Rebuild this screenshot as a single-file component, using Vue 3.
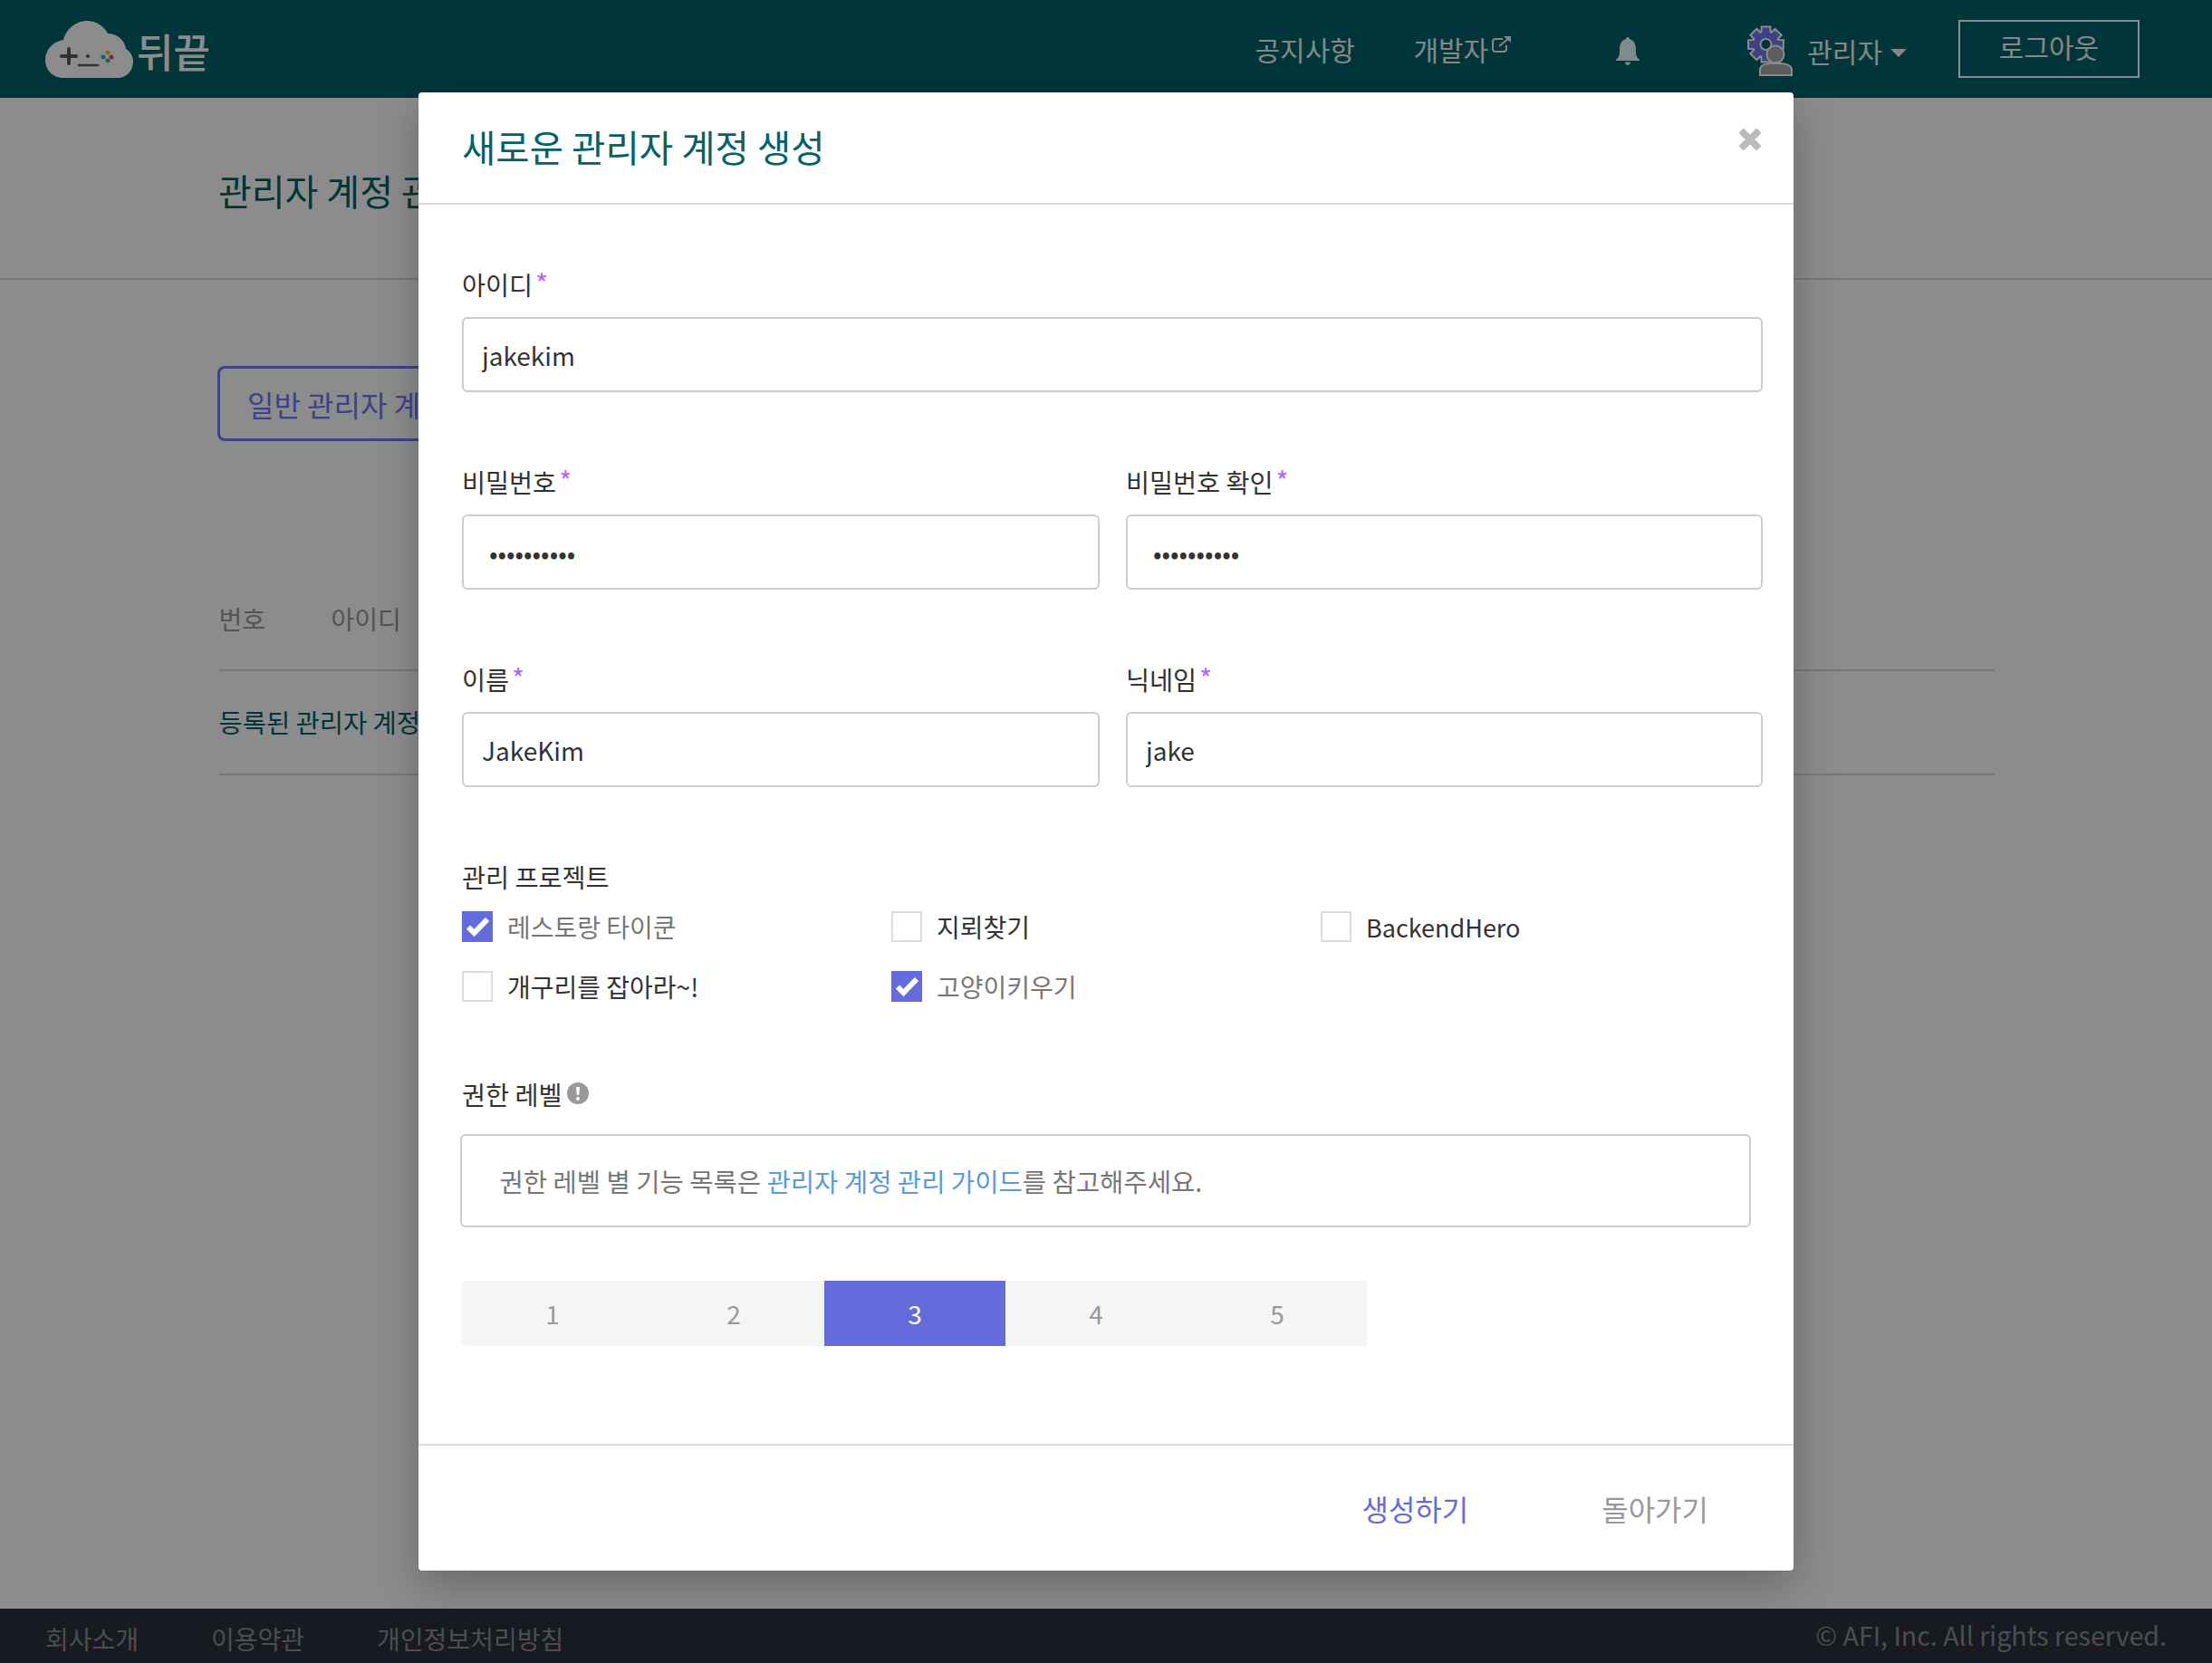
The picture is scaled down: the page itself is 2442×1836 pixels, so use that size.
<template>
  <div class="page">
    <header class="topbar">
      <div class="logo">
        <svg class="logo-cloud" viewBox="0 0 97 63" width="97" height="63">
          <path d="M20 63C8 63 0 54 0 43C0 32 8 23 20 21C23 9 34 0 46 0C56 0 65 6 69 14C80 14 88 22 89 31C94 34 97 39 97 45C97 55 90 63 80 63Z" fill="#fff" />
          <path d="M26 31V47M18 39H34" stroke="#5a5a5a" stroke-width="4" stroke-linecap="round" />
          <circle cx="47" cy="39" r="2" fill="#5a5a5a" />
          <path d="M37 49H58" stroke="#5a5a5a" stroke-width="2.5" stroke-linecap="round" />
          <circle cx="69" cy="35" r="2.5" fill="#f5c518" />
          <circle cx="64" cy="40" r="2.5" fill="#27b5d8" />
          <circle cx="73" cy="40" r="2.5" fill="#f0436a" />
          <circle cx="69" cy="44" r="2.5" fill="#3fbf7f" />
        </svg>
        <span class="logo-text">뒤끝</span>
      </div>
      <nav class="topnav">
        <a class="nav-link">공지사항</a>
        <a class="nav-link dev">개발자
          <svg class="ext-icon" viewBox="0 0 24 20" width="24" height="20" fill="none" stroke="#f5f5f5" stroke-width="2">
            <path d="M13 4H5C3 4 2 5 2 7V15C2 17 3 18 5 18H14C16 18 17 17 17 15V11" />
            <path d="M9 12L20 3" />
            <path d="M14 1H22V8Z" fill="#f5f5f5" stroke="none" />
          </svg>
        </a>
        <svg class="bell" viewBox="0 0 26 31" width="26" height="31">
          <path d="M13 0C14.3 0 15 1 15 2C20 3.5 22 8 22 13V18C22 21 24 23 26 25V26H0V25C2 23 4 21 4 18V13C4 8 6 3.5 11 2C11 1 11.7 0 13 0Z" fill="#e9fbfb" />
          <path d="M10 27.5H16C16 29.5 14.5 31 13 31C11.5 31 10 29.5 10 27.5Z" fill="#e9fbfb" />
        </svg>
        <svg class="admin-icon" viewBox="0 0 52 58" width="52" height="58">
          <path :d="gearPath" fill="#7078f8" stroke="#fff" stroke-width="2" fill-rule="evenodd" />
          <circle cx="31" cy="33" r="9.5" fill="#aaa" stroke="#fff" stroke-width="2" />
          <path d="M14 56V50C14 45 20 43 26 43H36C42 43 49 45 49 50V56Z" fill="#aaa" stroke="#fff" stroke-width="2" />
        </svg>
        <span class="admin-name">관리자</span>
        <span class="caret"></span>
        <button class="logout">로그아웃</button>
      </nav>
    </header>

    <main class="content">
      <div class="title-block">
        <h1>관리자 계정 관리</h1>
      </div>
      <div class="inner">
        <button class="outline-btn">일반 관리자 계정 생성</button>
        <div class="table-head">
          <span class="col-no">번호</span>
          <span>아이디</span>
        </div>
        <div class="table-row"><span>등록된 관리자 계정이 없습니다.</span></div>
      </div>
    </main>

    <footer class="bottombar">
      <div class="foot-links">
        <a>회사소개</a>
        <a>이용약관</a>
        <a>개인정보처리방침</a>
      </div>
      <span class="copyright">© AFI, Inc. All rights reserved.</span>
    </footer>

    <div class="overlay"></div>

    <div class="modal">
      <div class="modal-head">
        <h2>새로운 관리자 계정 생성</h2>
        <svg class="close" viewBox="2 2 20 20" width="24" height="24">
          <path d="M3 6L6 3L12 9L18 3L21 6L15 12L21 18L18 21L12 15L6 21L3 18L9 12Z" fill="#bbb" stroke="#bbb" stroke-width="2" stroke-linejoin="round" />
        </svg>
      </div>

      <div class="modal-body">
        <div class="form-group">
          <label>아이디<em>*</em></label>
          <input v-model="form.id" type="text" />
        </div>

        <div class="form-row">
          <div class="form-group">
            <label>비밀번호<em>*</em></label>
            <input v-model="form.password" type="password" class="pw" />
          </div>
          <div class="form-group">
            <label>비밀번호 확인<em>*</em></label>
            <input v-model="form.passwordCheck" type="password" class="pw" />
          </div>
        </div>

        <div class="form-row">
          <div class="form-group">
            <label>이름<em>*</em></label>
            <input v-model="form.name" type="text" />
          </div>
          <div class="form-group">
            <label>닉네임<em>*</em></label>
            <input v-model="form.nickname" type="text" />
          </div>
        </div>

        <div class="form-group tight">
          <label>관리 프로젝트</label>
          <div class="projects">
            <div
              v-for="p in projects"
              :key="p.name"
              class="project"
              :class="{ checked: p.checked, latin: p.latin }"
              @click="p.checked = !p.checked"
            >
              <span class="box">
                <svg v-if="p.checked" viewBox="0 0 34 34" width="34" height="34">
                  <path d="M7 17.5L13.5 24L28 9" fill="none" stroke="#fff" stroke-width="6" />
                </svg>
              </span>
              <span>{{ p.name }}</span>
            </div>
          </div>
        </div>

        <div class="form-group level">
          <label>
            권한 레벨
            <svg class="info" viewBox="0 0 24 24" width="24" height="24">
              <circle cx="12" cy="12" r="12" fill="#999" />
              <path d="M10 5H14L13.2 14H10.8Z" fill="#fff" />
              <circle cx="12" cy="18" r="2" fill="#fff" />
            </svg>
          </label>
          <div class="guide">
            권한 레벨 별 기능 목록은 <a>관리자 계정 관리 가이드</a>를 참고해주세요.
          </div>
          <div class="levels">
            <div
              v-for="n in 5"
              :key="n"
              class="level-item"
              :class="{ active: form.level === n }"
              @click="form.level = n"
            >{{ n }}</div>
          </div>
        </div>
      </div>

      <div class="modal-foot">
        <button class="btn-create">생성하기</button>
        <button class="btn-back">돌아가기</button>
      </div>
    </div>
  </div>
</template>

<script setup>
import { reactive } from 'vue'

const form = reactive({
  id: 'jakekim',
  password: 'abcd123456',
  passwordCheck: 'abcd123456',
  name: 'JakeKim',
  nickname: 'jake',
  level: 3
})

const projects = reactive([
  { name: '레스토랑 타이쿤', checked: true },
  { name: '지뢰찾기', checked: false },
  { name: 'BackendHero', checked: false, latin: true },
  { name: '개구리를 잡아라~!', checked: false },
  { name: '고양이키우기', checked: true }
])

// 톱니 8개짜리 기어 모양
function makeGear(cx, cy, outer, inner, hole) {
  let d = ''
  for (let i = 0; i < 8; i++) {
    const a = (i * Math.PI) / 4
    const pts = [
      [inner, a - 0.36],
      [outer, a - 0.25],
      [outer, a + 0.25],
      [inner, a + 0.36]
    ]
    pts.forEach(([r, t], j) => {
      const x = (cx + r * Math.cos(t)).toFixed(1)
      const y = (cy + r * Math.sin(t)).toFixed(1)
      d += (i === 0 && j === 0 ? 'M' : 'L') + x + ' ' + y
    })
  }
  d += 'Z'
  d += `M${cx + hole} ${cy}A${hole} ${hole} 0 1 0 ${cx - hole} ${cy}A${hole} ${hole} 0 1 0 ${cx + hole} ${cy}Z`
  return d
}

const gearPath = makeGear(20.5, 22, 20, 14.5, 6)
</script>

<style>
html,
body {
  margin: 0;
  background: #fff;
}
</style>

<style scoped>
.page {
  position: relative;
  display: flex;
  flex-direction: column;
  min-height: 100vh;
  overflow: hidden;
  font-family: "Noto Sans CJK KR", "Noto Sans", sans-serif;
  font-size: 28px;
  color: #333;
  background: #fff;
}

.topbar {
  display: flex;
  justify-content: space-between;
  align-items: center;
  height: 108px;
  padding: 0 80px 0 50px;
  background: #00636a;
  color: #f5f5f5;
  flex-shrink: 0;
}

.logo {
  display: flex;
  align-items: center;
  gap: 4px;
}

.logo-text {
  font-size: 44px;
  font-weight: 500;
  color: #fff;
  line-height: 1;
  margin-top: 4px;
}

.topnav {
  display: flex;
  align-items: center;
}

.nav-link {
  font-size: 30px;
}

.dev {
  display: flex;
  align-items: flex-start;
  margin-left: 64.5px;
}

.ext-icon {
  margin: 7px 0 0 3px;
}

.bell {
  margin-left: 113.5px;
  margin-top: 4px;
}

.admin-icon {
  margin-left: 119px;
  margin-top: 4px;
}

.admin-name {
  margin-left: 14.5px;
  margin-top: 3px;
  font-size: 30px;
}

.caret {
  width: 0;
  height: 0;
  margin: 8px 0 0 9px;
  border-left: 9px solid transparent;
  border-right: 9px solid transparent;
  border-top: 9px solid #f5f5f5;
}

.logout {
  width: 200px;
  height: 64px;
  margin-left: 57px;
  margin-bottom: 1px;
  padding: 0 0 5px;
  background: transparent;
  border: 2px solid #fff;
  font-family: inherit;
  font-size: 30px;
  color: #f5f5f5;
}

.content {
  flex: 1;
}

.title-block {
  display: flex;
  align-items: center;
  height: 199px;
  padding: 0 241px;
  border-bottom: 2px solid #d9d9d9;
}

.title-block h1 {
  margin: 5px 0 0;
  font-size: 40px;
  font-weight: 400;
  color: #00636a;
}

.inner {
  padding: 95px 240px 0;
}

.outline-btn {
  display: block;
  height: 83px;
  padding: 0 30px;
  background: #fff;
  border: 3px solid #7078f8;
  border-radius: 8px;
  font-family: inherit;
  font-size: 32px;
  color: #7078f8;
}

.table-head {
  display: flex;
  align-items: center;
  height: 112px;
  margin: 140px 0 0 1.5px;
  border-bottom: 2px solid #d9d9d9;
  color: #999;
}

.col-no {
  width: 124px;
}

.table-row {
  display: flex;
  align-items: center;
  box-sizing: border-box;
  height: 115px;
  margin-left: 1.5px;
  padding-bottom: 3px;
  border-bottom: 2px solid #d9d9d9;
  font-size: 28.5px;
  color: #00636a;
}

.bottombar {
  display: flex;
  justify-content: space-between;
  align-items: center;
  height: 60px;
  padding: 0 50px;
  background: #2c313e;
  color: #8c8c8c;
  flex-shrink: 0;
}

.foot-links {
  display: flex;
  gap: 80px;
  padding-top: 5px;
}

.copyright {
  font-size: 28.6px;
  margin-top: -4px;
}

.overlay {
  position: absolute;
  inset: 0;
  background: rgba(0, 0, 0, 0.45);
}

.modal {
  position: absolute;
  top: 102px;
  left: 462px;
  display: flex;
  flex-direction: column;
  width: 1518px;
  height: 1632px;
  background: #fff;
  border-radius: 4px;
  box-shadow: 0 16px 48px rgba(0, 0, 0, 0.25);
}

.modal-head {
  position: relative;
  display: flex;
  align-items: center;
  box-sizing: border-box;
  height: 124px;
  padding: 0 0 4px 48px;
  border-bottom: 2px solid #ddd;
  flex-shrink: 0;
}

.modal-head h2 {
  margin: 0;
  font-size: 40.6px;
  font-weight: 400;
  color: #00636a;
}

.close {
  position: absolute;
  top: 40px;
  right: 36px;
}

.modal-body {
  padding: 67px 34px 0 48px;
}

.form-group {
  margin-bottom: 78px;
}

.form-group > label {
  display: flex;
  align-items: center;
  height: 40px;
  margin-bottom: 17px;
  font-size: 28.3px;
  color: #333;
}

.form-group em {
  margin: -2px 0 0 3px;
  font-style: normal;
  font-size: 30px;
  line-height: 1;
  color: #b366ff;
}

.form-group input {
  display: block;
  box-sizing: border-box;
  width: 100%;
  height: 83px;
  padding: 0 20px;
  border: 2px solid #ccc;
  border-radius: 6px;
  font-family: inherit;
  font-size: 28px;
  color: #333;
  outline: none;
}

.form-group input.pw {
  padding-left: 28px;
}

.form-row {
  display: grid;
  grid-template-columns: 704px 703px;
  column-gap: 29px;
}

.form-group.tight > label {
  margin-bottom: 19px;
}

.form-group.tight {
  margin-bottom: 81px;
}

.projects {
  display: grid;
  grid-template-columns: repeat(3, 474px);
  row-gap: 32px;
}

.project {
  display: flex;
  align-items: center;
  gap: 16px;
  height: 34px;
  font-size: 28px;
  color: #333;
  cursor: pointer;
}

.project.latin {
  font-size: 27px;
}

.project.checked {
  color: #777;
}

.box {
  box-sizing: border-box;
  width: 34px;
  height: 34px;
  border: 2px solid #ddd;
  flex-shrink: 0;
}

.project.checked .box {
  border: 0;
  background: #636bdd;
}

.box svg {
  display: block;
}

.form-group.level {
  margin-bottom: 0;
}

.form-group.level > label {
  margin-bottom: 25px;
}

.info {
  margin-left: 6px;
}

.guide {
  display: flex;
  align-items: center;
  box-sizing: border-box;
  width: 1425px;
  height: 103px;
  margin-left: -2px;
  padding: 0 35px;
  border: 2px solid #ccc;
  border-radius: 6px;
  font-size: 28.6px;
  color: #777;
  white-space: pre;
}

.guide a {
  color: #5b9bd5;
}

.levels {
  display: flex;
  width: 1000px;
  height: 72px;
  margin-top: 59px;
  background: #f5f5f5;
  border-radius: 4px;
  overflow: hidden;
}

.level-item {
  display: flex;
  flex: 1;
  justify-content: center;
  align-items: center;
  font-size: 28px;
  color: #999;
  cursor: pointer;
}

.level-item.active {
  background: #636bdd;
  color: #fff;
}

.modal-foot {
  display: flex;
  justify-content: flex-end;
  align-items: center;
  gap: 147px;
  height: 140px;
  margin-top: auto;
  padding: 0 94px 0 0;
  box-sizing: border-box;
  border-top: 2px solid #ddd;
}

.modal-foot button {
  padding: 0;
  background: none;
  border: 0;
  font-family: inherit;
  font-size: 32px;
  cursor: pointer;
}

.btn-create {
  color: #636bdd;
}

.btn-back {
  color: #999;
}
</style>
